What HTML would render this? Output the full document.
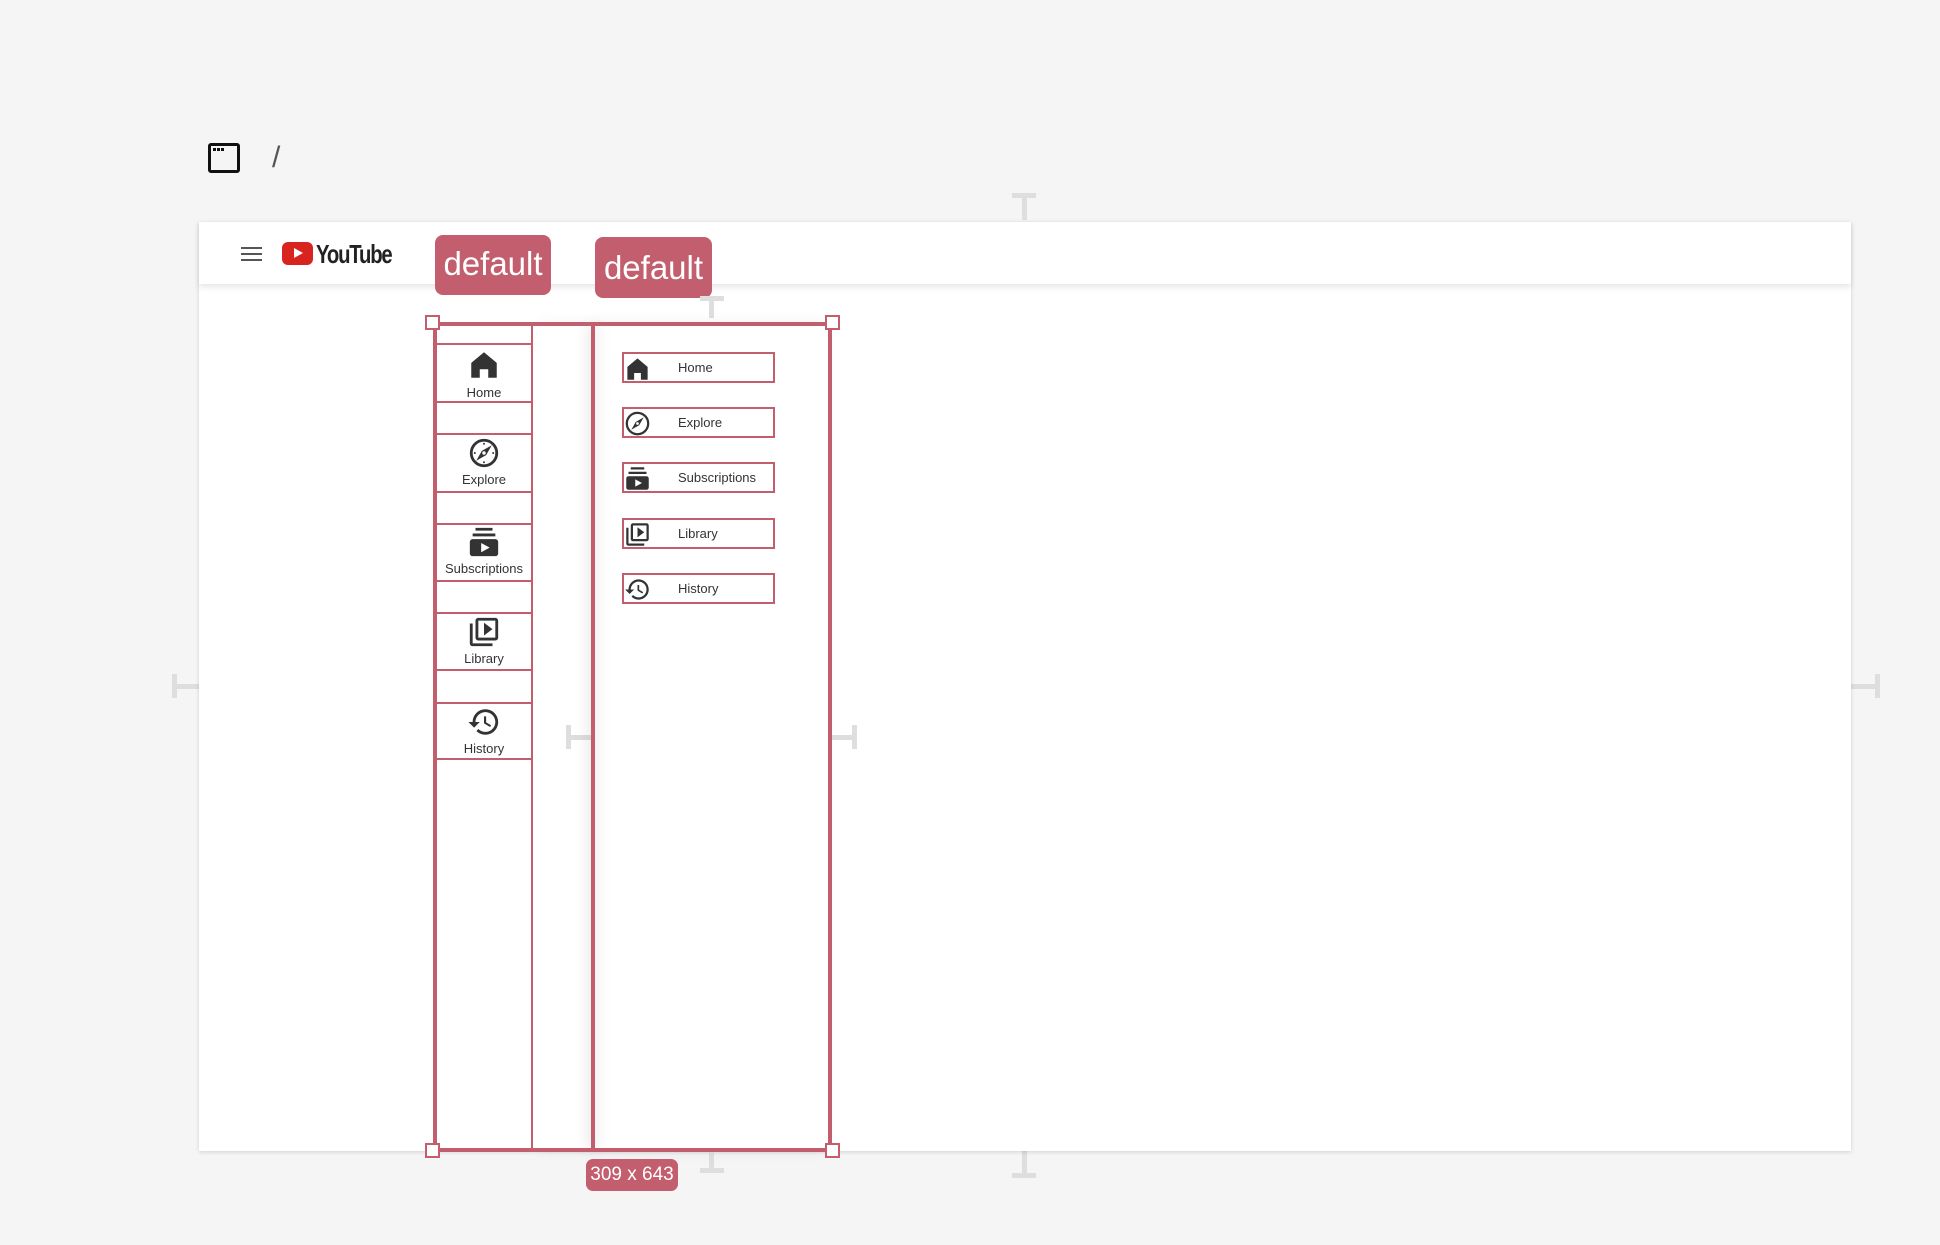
<!DOCTYPE html>
<html><head><meta charset="utf-8"><style>
*{margin:0;padding:0;box-sizing:border-box}
body{width:1940px;height:1245px;background:#f5f5f5;position:relative;overflow:hidden;font-family:"Liberation Sans",sans-serif;color:#333}
.a{position:absolute}
.g{position:absolute;background:#dedede}
.badge{position:absolute;background:#c25e6d;color:#fff;border-radius:8px;font-family:"Liberation Sans Narrow","Liberation Sans",sans-serif;text-align:center}
.r{background:#c25e6d;position:absolute}
.h{position:absolute;width:15px;height:15px;background:#fff;border:2px solid #c25e6d}
.sep{position:absolute;left:437px;width:96px;height:2px;background:#c25e6d}
.li{position:absolute;left:437px;width:94px;text-align:center;font-size:13px;color:#333}
.li svg{display:block;margin:0 auto;fill:#333}
.ri{position:absolute;left:622px;width:153px;height:31px;border:2px solid #c25e6d;font-size:13px;color:#333}
.ri svg{position:absolute;left:0px;top:1px;fill:#333}
.ri span{position:absolute;left:54px;top:6px}
</style></head><body>
<div class="a" style="left:208px;top:143px;width:32px;height:30px;border:3px solid #111;border-radius:3px"></div>
<div class="a" style="left:213px;top:148px;width:3px;height:3px;background:#111;box-shadow:4px 0 #111,8px 0 #111"></div>
<div class="a" style="left:272px;top:141px;font-size:30px;color:#555">/</div>
<div class="g" style="left:1012px;top:193px;width:24px;height:5px"></div>
<div class="g" style="left:1022px;top:193px;width:5px;height:27px"></div>
<div class="g" style="left:1012px;top:1173px;width:24px;height:5px"></div>
<div class="g" style="left:1022px;top:1151px;width:5px;height:27px"></div>
<div class="g" style="left:172px;top:674px;width:5px;height:24px"></div>
<div class="g" style="left:172px;top:684px;width:27px;height:5px"></div>
<div class="g" style="left:1875px;top:674px;width:5px;height:24px"></div>
<div class="g" style="left:1851px;top:684px;width:27px;height:5px"></div>
<div class="a" style="left:199px;top:222px;width:1652px;height:929px;background:#fff;box-shadow:0 1px 4px rgba(0,0,0,.15)"></div>
<div class="a" style="left:199px;top:222px;width:1652px;height:62px;background:#fff;box-shadow:0 3px 6px rgba(0,0,0,.1)"></div>
<div class="a" style="left:241px;top:247px;width:21px;height:2px;background:#555;box-shadow:0 6px #555,0 12px #555"></div>
<div class="a" style="left:282px;top:242px;width:31px;height:23px;background:#d9231f;border-radius:6px"></div>
<div class="a" style="left:294px;top:248px;width:0;height:0;border-left:9px solid #fff;border-top:5.5px solid transparent;border-bottom:5.5px solid transparent"></div>
<div class="a" style="left:316px;top:239px;font-size:26px;letter-spacing:-1.5px;color:#222;font-family:'Liberation Sans Narrow','Liberation Sans',sans-serif;font-weight:bold;transform:scaleX(.78);transform-origin:left">YouTube</div>
<div class="badge" style="left:435px;top:235px;width:116px;height:60px;font-size:33px;line-height:58px">default</div>
<div class="badge" style="left:595px;top:237px;width:117px;height:61px;font-size:33px;line-height:62px">default</div>
<div class="g" style="left:700px;top:296px;width:24px;height:5px"></div>
<div class="g" style="left:709px;top:296px;width:5px;height:22px"></div>
<div class="g" style="left:700px;top:1168px;width:24px;height:5px"></div>
<div class="g" style="left:709px;top:1151px;width:5px;height:22px"></div>
<div class="g" style="left:566px;top:725px;width:5px;height:24px"></div>
<div class="g" style="left:566px;top:735px;width:25px;height:5px"></div>
<div class="g" style="left:852px;top:725px;width:5px;height:24px"></div>
<div class="g" style="left:832px;top:735px;width:25px;height:5px"></div>
<div class="a" style="left:593px;top:324px;width:237px;height:826px;box-shadow:-6px 0 14px rgba(0,0,0,.08)"></div>
<div class="a" style="left:533px;top:324px;width:60px;height:826px;box-shadow:6px 0 14px rgba(0,0,0,.06)"></div>
<div class="r" style="left:433px;top:322px;width:399px;height:4px"></div>
<div class="r" style="left:433px;top:1148px;width:399px;height:4px"></div>
<div class="r" style="left:433px;top:322px;width:4px;height:830px"></div>
<div class="r" style="left:828px;top:322px;width:4px;height:830px"></div>
<div class="r" style="left:531px;top:324px;width:2px;height:826px"></div>
<div class="r" style="left:591px;top:324px;width:4px;height:826px"></div>
<div class="h" style="left:425px;top:315px"></div>
<div class="h" style="left:825px;top:315px"></div>
<div class="h" style="left:425px;top:1143px"></div>
<div class="h" style="left:825px;top:1143px"></div>
<div class="badge" style="left:586px;top:1159px;width:92px;height:32px;font-size:19px;line-height:32px;border-radius:7px">309 x 643</div>
<div class="sep" style="top:343px"></div><div class="sep" style="top:401px"></div>
<div class="sep" style="top:433px"></div><div class="sep" style="top:491px"></div>
<div class="sep" style="top:523px"></div><div class="sep" style="top:580px"></div>
<div class="sep" style="top:612px"></div><div class="sep" style="top:669px"></div>
<div class="sep" style="top:702px"></div><div class="sep" style="top:758px"></div>
<div class="li" style="top:348px"><svg width="34" height="34" viewBox="0 0 24 24"><path d="M12 3L3 10.5V21h6v-6h6v6h6V10.5z"/></svg><div style="margin-top:3px">Home</div></div>
<div class="li" style="top:436px"><svg width="34" height="34" viewBox="0 0 24 24"><circle cx="12" cy="12" r="9" fill="none" stroke="#333" stroke-width="2"/><path d="M17.5 6.5l-4 7L6.5 17.5l4-7z"/><circle cx="12" cy="12" r="1.2" fill="#fff"/><g fill="#333"><circle cx="12" cy="5.5" r=".7"/><circle cx="12" cy="18.5" r=".7"/><circle cx="5.5" cy="12" r=".7"/><circle cx="18.5" cy="12" r=".7"/></g></svg><div style="margin-top:2px">Explore</div></div>
<div class="li" style="top:525px"><svg width="34" height="34" viewBox="0 0 24 24"><path d="M20 8H4V6h16v2zm-2-6H6v2h12V2zm4 10v8c0 1.1-.9 2-2 2H4c-1.1 0-2-.9-2-2v-8c0-1.1.9-2 2-2h16c1.1 0 2 .9 2 2zm-6 4l-6-3.27v6.53L16 16z"/></svg><div style="margin-top:2px">Subscriptions</div></div>
<div class="li" style="top:615px"><svg width="34" height="34" viewBox="0 0 24 24"><path d="M4 6H2v14c0 1.1.9 2 2 2h14v-2H4V6zm16-4H8c-1.1 0-2 .9-2 2v12c0 1.1.9 2 2 2h12c1.1 0 2-.9 2-2V4c0-1.1-.9-2-2-2zm0 14H8V4h12v12zM12 5.5v9l6-4.5z"/></svg><div style="margin-top:2px">Library</div></div>
<div class="li" style="top:705px"><svg width="34" height="34" viewBox="0 0 24 24"><path d="M13 3c-4.97 0-9 4.03-9 9H1l3.89 3.89.07.14L9 12H6c0-3.87 3.13-7 7-7s7 3.13 7 7-3.13 7-7 7c-1.93 0-3.68-.79-4.94-2.06l-1.42 1.42C8.27 19.99 10.51 21 13 21c4.97 0 9-4.03 9-9s-4.03-9-9-9zm-1 5v5l4.28 2.54.72-1.21-3.5-2.08V8H12z"/></svg><div style="margin-top:2px">History</div></div>
<div class="ri" style="top:352px"><svg width="27" height="27" viewBox="0 0 24 24"><path d="M12 3L3 10.5V22h6v-6h6v6h6V10.5z"/></svg><span>Home</span></div>
<div class="ri" style="top:407px"><svg width="27" height="27" viewBox="0 0 24 24"><circle cx="12" cy="12" r="9.5" fill="none" stroke="#333" stroke-width="2"/><path d="M17.5 6.5l-4 7L6.5 17.5l4-7z"/><circle cx="12" cy="12" r="1.2" fill="#fff"/></svg><span>Explore</span></div>
<div class="ri" style="top:462px"><svg width="27" height="27" viewBox="0 0 24 24"><path d="M20 8H4V6h16v2zm-2-6H6v2h12V2zm4 10v8c0 1.1-.9 2-2 2H4c-1.1 0-2-.9-2-2v-8c0-1.1.9-2 2-2h16c1.1 0 2 .9 2 2zm-6 4l-6-3.27v6.53L16 16z"/></svg><span>Subscriptions</span></div>
<div class="ri" style="top:518px"><svg width="27" height="27" viewBox="0 0 24 24"><path d="M4 6H2v14c0 1.1.9 2 2 2h14v-2H4V6zm16-4H8c-1.1 0-2 .9-2 2v12c0 1.1.9 2 2 2h12c1.1 0 2-.9 2-2V4c0-1.1-.9-2-2-2zm0 14H8V4h12v12zM12 5.5v9l6-4.5z"/></svg><span>Library</span></div>
<div class="ri" style="top:573px"><svg width="27" height="27" viewBox="0 0 24 24"><path d="M13 3c-4.97 0-9 4.03-9 9H1l3.89 3.89.07.14L9 12H6c0-3.87 3.13-7 7-7s7 3.13 7 7-3.13 7-7 7c-1.93 0-3.68-.79-4.94-2.06l-1.42 1.42C8.27 19.99 10.510 21 13 21c4.97 0 9-4.03 9-9s-4.03-9-9-9zm-1 5v5l4.28 2.54.72-1.21-3.5-2.08V8H12z"/></svg><span>History</span></div>
</body></html>
